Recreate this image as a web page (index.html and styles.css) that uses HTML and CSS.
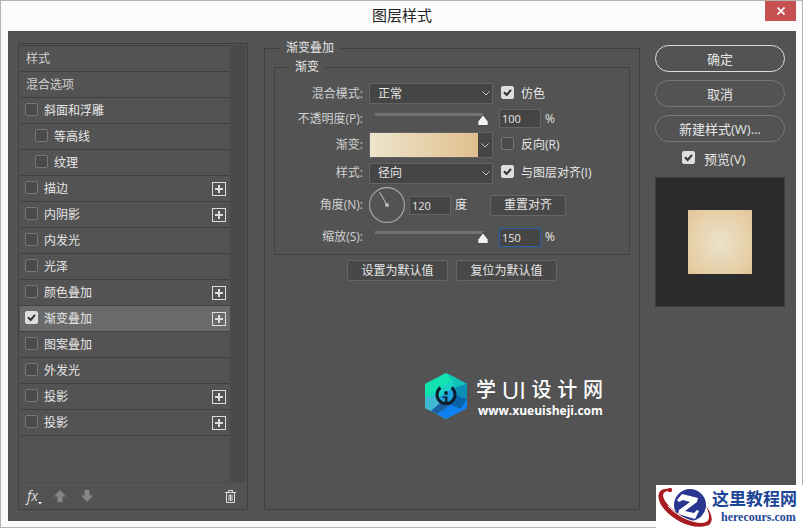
FILE: index.html
```html
<!DOCTYPE html>
<html lang="zh-CN">
<head>
    <meta charset="UTF-8">
    <meta name="viewport" content="width=device-width, initial-scale=1.0">
    <title>图层样式</title>
    <link rel="stylesheet" href="styles.css">
</head>
<body>
    <div class="window">
        <header class="titlebar">
            <h1>图层样式</h1>
            <button class="close" type="button" aria-label="关闭">
                <svg width="8" height="8" viewBox="0 0 8 8"><path d="M0.5 0.5L7.5 7.5M7.5 0.5L0.5 7.5" stroke="#fff" stroke-width="1.7"/></svg>
            </button>
        </header>

        <form class="dialog">
            <aside class="sidebar">
                <div class="list-wrap">
                    <ul class="list">
                        <li class="plain">样式</li>
                        <li class="plain">混合选项</li>
                        <li><label><input type="checkbox">斜面和浮雕</label></li>
                        <li class="sub"><label><input type="checkbox">等高线</label></li>
                        <li class="sub"><label><input type="checkbox">纹理</label></li>
                        <li><label><input type="checkbox">描边</label><button class="add" type="button" aria-label="添加描边"></button></li>
                        <li><label><input type="checkbox">内阴影</label><button class="add" type="button" aria-label="添加内阴影"></button></li>
                        <li><label><input type="checkbox">内发光</label></li>
                        <li><label><input type="checkbox">光泽</label></li>
                        <li><label><input type="checkbox">颜色叠加</label><button class="add" type="button" aria-label="添加颜色叠加"></button></li>
                        <li class="active"><label><input type="checkbox" checked>渐变叠加</label><button class="add" type="button" aria-label="添加渐变叠加"></button></li>
                        <li><label><input type="checkbox">图案叠加</label></li>
                        <li><label><input type="checkbox">外发光</label></li>
                        <li><label><input type="checkbox">投影</label><button class="add" type="button" aria-label="添加投影"></button></li>
                        <li><label><input type="checkbox">投影</label><button class="add" type="button" aria-label="添加投影"></button></li>
                    </ul>
                    <div class="scrollbar"></div>
                </div>
                <div class="tools">
                    <button class="tool fx" type="button">fx<svg width="4" height="3" viewBox="0 0 4 3"><path d="M0 0h4L2 2.5z" fill="#eee"/></svg></button>
                    <button class="tool" type="button" aria-label="上移">
                        <svg width="12" height="12" viewBox="0 0 12 12"><path d="M6 0L12 6.5H8.5V12H3.5V6.5H0z" fill="#868686"/></svg>
                    </button>
                    <button class="tool" type="button" aria-label="下移">
                        <svg width="12" height="12" viewBox="0 0 12 12"><path d="M6 12L12 5.5H8.5V0H3.5V5.5H0z" fill="#868686"/></svg>
                    </button>
                    <button class="tool trash" type="button" aria-label="删除">
                        <svg width="11" height="13" viewBox="0 0 11 13" fill="none" stroke="#ddd"><path d="M0 2.5h11M3.5 2.5v-2h4v2M1.5 2.5v10h8v-10M4 4.5v6.5M5.5 4.5v6.5M7 4.5v6.5"/></svg>
                    </button>
                </div>
            </aside>

            <fieldset class="panel">
                <legend>渐变叠加</legend>
                <fieldset class="group">
                    <legend>渐变</legend>

                    <div class="row">
                        <label class="name" for="blend">混合模式:</label>
                        <div class="select">
                            <select id="blend"><option>正常</option></select>
                            <svg class="chevron" width="8" height="5" viewBox="0 0 8 5"><path d="M0.5 0.5L4 4L7.5 0.5"/></svg>
                        </div>
                        <label class="check"><input type="checkbox" checked>仿色</label>
                    </div>

                    <div class="row">
                        <label class="name" for="opacity">不透明度(P):</label>
                        <input class="slider" type="range" min="0" max="100" value="100" aria-label="不透明度">
                        <div class="value"><input class="number" type="text" id="opacity" value="100">%</div>
                    </div>

                    <div class="row tall">
                        <label class="name" for="gradient">渐变:</label>
                        <button class="gradient" id="gradient" type="button" aria-label="渐变">
                            <span class="swatch"></span>
                            <svg class="chevron" width="8" height="5" viewBox="0 0 8 5"><path d="M0.5 0.5L4 4L7.5 0.5"/></svg>
                        </button>
                        <label class="check"><input type="checkbox">反向(R)</label>
                    </div>

                    <div class="row tall">
                        <label class="name" for="style">样式:</label>
                        <div class="select">
                            <select id="style"><option>径向</option></select>
                            <svg class="chevron" width="8" height="5" viewBox="0 0 8 5"><path d="M0.5 0.5L4 4L7.5 0.5"/></svg>
                        </div>
                        <label class="check"><input type="checkbox" checked>与图层对齐(I)</label>
                    </div>

                    <div class="row">
                        <label class="name" for="angle">角度(N):</label>
                        <div class="angle">
                            <svg width="36" height="36" viewBox="0 0 36 36"><circle cx="18" cy="18" r="17.4" fill="none" stroke="#aaa" stroke-width="1.1"/><path d="M18 18L10.5 5" stroke="#aaa" stroke-width="1.2"/><circle cx="18" cy="18" r="2" fill="#bbb"/></svg>
                            <input class="number" type="text" id="angle" value="120">
                            <span>度</span>
                            <button class="btn reset" type="button">重置对齐</button>
                        </div>
                    </div>

                    <div class="row tall">
                        <label class="name" for="scale">缩放(S):</label>
                        <input class="slider" type="range" min="10" max="150" value="150" aria-label="缩放">
                        <div class="value"><input class="number focused" type="text" id="scale" value="150">%</div>
                    </div>
                </fieldset>

                <div class="defaults">
                    <button class="btn" type="button">设置为默认值</button>
                    <button class="btn" type="button">复位为默认值</button>
                </div>

                <div class="brand">
                    <svg width="42" height="46" viewBox="0 0 42 46">
                        <path d="M21 0L42 11V35L21 46L0 35V11z" fill="#1fa5dd"/>
                        <path d="M21 0L0 11V25L12 20L31 5z" fill="#12e2ae"/>
                        <path d="M0 25L12 17L31 5L21 0L32 6L28 15L14 24z" fill="#1ad3c4"/>
                        <path d="M21 0L42 11L31 16L28 9z" fill="#0fc5b8"/>
                        <path d="M0 25L14 22L15 34L8 39L0 35z" fill="#3fb8d4"/>
                        <path d="M42 11V26L30 22L31 14z" fill="#0c8fb5"/>
                        <path d="M30 22L42 26L36 36L24 32z" fill="#0a63a8"/>
                        <path d="M42 26V35L21 46L12 41L26 32L36 36z" fill="#0e80f2"/>
                        <path d="M15 30L27 31L12 41L6 38z" fill="#1b5f9e"/>
                        <path d="M15.500 14.500A9 9 0 1 0 26.500 14.500" fill="none" stroke="#0f1f2e" stroke-width="3"/>
                        <circle cx="21" cy="20" r="1.900" fill="#0f1f2e"/>
                        <path d="M17.500 23.500H22.500V29H25V31H17.500V29H20V25H17.500z" fill="#0f1f2e"/>
                    </svg>
                    <div class="brand-text">
                        <div class="brand-name"><span>学</span><span class="ui">UI</span><span>设</span><span>计</span><span>网</span></div>
                        <div class="brand-url">www.xueuisheji.com</div>
                    </div>
                </div>
            </fieldset>

            <div class="actions">
                <button class="pill primary" type="submit">确定</button>
                <button class="pill" type="button">取消</button>
                <button class="pill" type="button">新建样式(W)...</button>
                <label class="preview-check"><input type="checkbox" checked>预览(V)</label>
                <div class="preview"><div class="sample"></div></div>
            </div>
        </form>

        <div class="corner">
            <svg width="56" height="43" viewBox="0 0 56 43">
                <circle cx="34" cy="20" r="16" fill="#2a3590"/>
                <path d="M21 15L26 9L42 13L41 17L29 26L38 28L41 25L43 26L39 34L22 29L23 25L34 17L27 15L23 17z" fill="#fff"/>
                <path d="M14 4C1 2 -1 13 8 24C18 36 38 46 53 40C57 37 57 30 50 21C54 30 54 35 50 37C40 40 24 32 14 22C5 13 5 6 13 6z" fill="#a81c22"/>
                <path d="M12 21C22 32 38 39 49 37" fill="none" stroke="#fff" stroke-width="1"/>
                <circle cx="14" cy="5" r="2.200" fill="#a81c22"/>
            </svg>
            <div class="corner-text">
                <div class="corner-name">这里教程网</div>
                <div class="corner-url">herecours.com</div>
            </div>
        </div>
    </div>
</body>
</html>
```
FILE: styles.css
```css
* {
    box-sizing: border-box;
}

body {
    margin: 0;
    font-family: "Open Sans", "Noto Sans CJK SC", sans-serif;
    font-size: 12px;
    line-height: 18px;
    color: #e6e6e6;
}

button, input, select {
    font: inherit;
    color: inherit;
    margin: 0;
}

button {
    padding: 0;
    border: none;
    background: none;
}

svg {
    display: block;
    flex: none;
}

.window {
    position: relative;
    display: flex;
    flex-direction: column;
    min-height: 100vh;
    padding: 0 6px 6px 7px;
    border: 1px solid #b4b4b4;
    background: #fbfbfb;
}

/* title bar */
.titlebar {
    position: relative;
    height: 30px;
}

.titlebar h1 {
    margin: 0;
    font-size: 15px;
    line-height: 28px;
    font-weight: normal;
    text-align: center;
    color: #222;
}

.close {
    position: absolute;
    top: 0;
    right: 0;
    display: flex;
    align-items: center;
    justify-content: center;
    width: 31px;
    height: 20px;
    background: #c75050;
}

.dialog {
    flex: 1;
    display: flex;
    gap: 15px;
    padding: 8px 11px 11px 10px;
    background: #535353;
}

/* check boxes */
input[type="checkbox"] {
    appearance: none;
    flex: none;
    width: 13px;
    height: 13px;
    margin-bottom: 3px;
    border: 1px solid #777;
    border-radius: 2px;
    background: #4a4a4a;
}

input[type="checkbox"]:checked {
    border-color: #dedede;
    background: #dedede url("data:image/svg+xml,%3Csvg xmlns='http://www.w3.org/2000/svg' viewBox='0 0 11 11'%3E%3Cpath d='M2 5.200L4.700 8L9 2.800' fill='none' stroke='%23333' stroke-width='2'/%3E%3C/svg%3E") center / 11px 11px no-repeat;
}

/* effect list */
.sidebar {
    flex: none;
    display: flex;
    flex-direction: column;
    width: 230px;
    margin: 4px 1px 0 0;
    border: 1px solid #404040;
}

.list-wrap {
    flex: 1;
    display: flex;
    margin: 1px 1px 0;
}

.list {
    flex: 1;
    margin: 0;
    padding: 0;
    list-style: none;
    border-top: 1px solid #404040;
}

.list li {
    display: flex;
    align-items: center;
    height: 26px;
    padding: 0 4px 0 5px;
    border-bottom: 1px solid #404040;
}

.list li.plain {
    padding-left: 6px;
    color: #d0d0d0;
}

.list li.sub {
    padding-left: 15px;
}

.list li.active {
    background: #6a6a6a;
}

.list li label {
    flex: 1;
    display: flex;
    align-items: center;
    gap: 6px;
}

.add {
    width: 14px;
    height: 14px;
    border: 1px solid #ddd;
    background: linear-gradient(#ddd, #ddd) center / 8px 2px no-repeat, linear-gradient(#ddd, #ddd) center / 2px 8px no-repeat;
}

.scrollbar {
    width: 16px;
    background: #4a4a4a;
}

.tools {
    display: flex;
    align-items: center;
    gap: 15px;
    height: 27px;
    padding: 0 11px 0 8px;
    border-top: 1px solid #4c4c4c;
}

.fx {
    display: flex;
    align-items: flex-end;
    width: 12px;
    font-size: 14px;
    font-style: italic;
    color: #ddd;
}

.trash {
    margin-left: auto;
}

/* settings */
fieldset {
    min-width: 0;
    margin: 0;
    padding: 0;
    border: 1px solid #404040;
}

legend {
    padding: 0 6px;
}

.panel {
    position: relative;
    flex: 1;
}

.panel > legend {
    margin-left: 15px;
}

.group {
    margin: 1px 9px 0;
    padding: 5px 0 3px;
}

.group > legend {
    margin-left: 14px;
}

.row {
    display: grid;
    grid-template-columns: 88px 124px 1fr;
    column-gap: 6px;
    align-items: center;
    min-height: 25px;
}

.row.tall {
    min-height: 28px;
}

.name {
    text-align: right;
    white-space: nowrap;
    color: #d0d0d0;
}

.select {
    position: relative;
}

.select select {
    display: block;
    appearance: none;
    width: 100%;
    height: 21px;
    padding: 0 8px;
    border: 1px solid #636363;
    border-radius: 0;
    background: #454545;
}

.chevron {
    fill: none;
    stroke: #c4c4c4;
}

.select .chevron {
    position: absolute;
    top: 8px;
    right: 3px;
    pointer-events: none;
}

.check {
    display: flex;
    align-items: center;
    gap: 7px;
    padding-left: 2px;
    white-space: nowrap;
}

.slider {
    appearance: none;
    width: 114px;
    height: 18px;
    margin-left: 6px;
    background: linear-gradient(#727272, #727272) 0 3px / 108px 3px no-repeat;
}

.slider::-webkit-slider-thumb {
    appearance: none;
    width: 12px;
    height: 12px;
    margin-top: 2px;
    background: url("data:image/svg+xml,%3Csvg xmlns='http://www.w3.org/2000/svg' viewBox='0 0 12 12'%3E%3Cpath d='M6 0.800L11.200 7.500V10.500Q11.200 11.500 10.200 11.500H1.800Q0.800 11.500 0.800 10.500V7.500z' fill='%23f2f2f2' stroke='%23333' stroke-width='0.800'/%3E%3C/svg%3E") no-repeat;
}

.value {
    display: flex;
    align-items: center;
    gap: 4px;
}

.number {
    width: 42px;
    height: 19px;
    padding: 0 2px;
    border: 1px solid #646464;
    background: #454545;
    font-size: 11px;
}

.number.focused {
    border-color: #2a5fae;
    outline: none;
}

.gradient {
    display: flex;
    align-items: center;
    width: 100%;
    height: 26px;
    padding-right: 3px;
    border: 1px solid #636363;
    background: #454545;
}

.swatch {
    flex: 1;
    align-self: stretch;
    margin-right: 3px;
    background: linear-gradient(to right, #ede5cd, #e1bf8d);
}

.angle {
    grid-column: 2 / 4;
    display: flex;
    align-items: center;
    gap: 4px;
}

.btn {
    height: 21px;
    min-width: 76px;
    border: 1px solid #666;
    border-radius: 2px;
    background: #484848;
    line-height: 16px;
}

.reset {
    margin-left: 19px;
}

.defaults {
    display: flex;
    justify-content: center;
    gap: 8px;
    margin-top: 5px;
}

.defaults .btn {
    width: 101px;
}

/* brand mark over the empty part of the panel */
.brand {
    position: absolute;
    right: 36px;
    bottom: 90px;
    display: flex;
    gap: 9px;
    color: #fff;
}

.brand-text {
    width: 127px;
}

.brand-name {
    display: flex;
    justify-content: space-between;
    margin-top: 2px;
    font-size: 20px;
    line-height: 30px;
    font-weight: 500;
}

.brand-name .ui {
    font-size: 24px;
}

.brand-url {
    padding-left: 2px;
    font-size: 12px;
    line-height: 12px;
    font-weight: bold;
}

/* right column */
.actions {
    flex: none;
    display: flex;
    flex-direction: column;
    width: 130px;
    margin-top: 6px;
    font-size: 13px;
}

.pill {
    height: 27px;
    margin-bottom: 8px;
    border: 1px solid #777;
    border-radius: 14px;
}

.pill.primary {
    border-color: #ddd;
}

.preview-check {
    display: flex;
    align-items: center;
    gap: 9px;
    height: 18px;
    padding-left: 27px;
}

.preview {
    display: flex;
    align-items: center;
    justify-content: center;
    aspect-ratio: 1;
    margin-top: 9px;
    border: 1px solid #3c3c3c;
    background: #2b2b2b;
}

.sample {
    width: 50%;
    aspect-ratio: 1;
    background: radial-gradient(circle, #ebe3cb, #e6cda5 75%, #e2c598);
}

/* site mark in the corner */
.corner {
    position: absolute;
    right: -1px;
    bottom: -1px;
    display: flex;
    width: 147px;
    height: 43px;
    background: #fff;
    color: #1d4595;
}

.corner-name {
    margin-top: 2px;
    font-size: 17px;
    line-height: 23px;
    font-weight: bold;
    white-space: nowrap;
}

.corner-url {
    padding-left: 9px;
    font-family: "Liberation Serif", serif;
    font-size: 12px;
    line-height: 14px;
    font-weight: bold;
}
```
